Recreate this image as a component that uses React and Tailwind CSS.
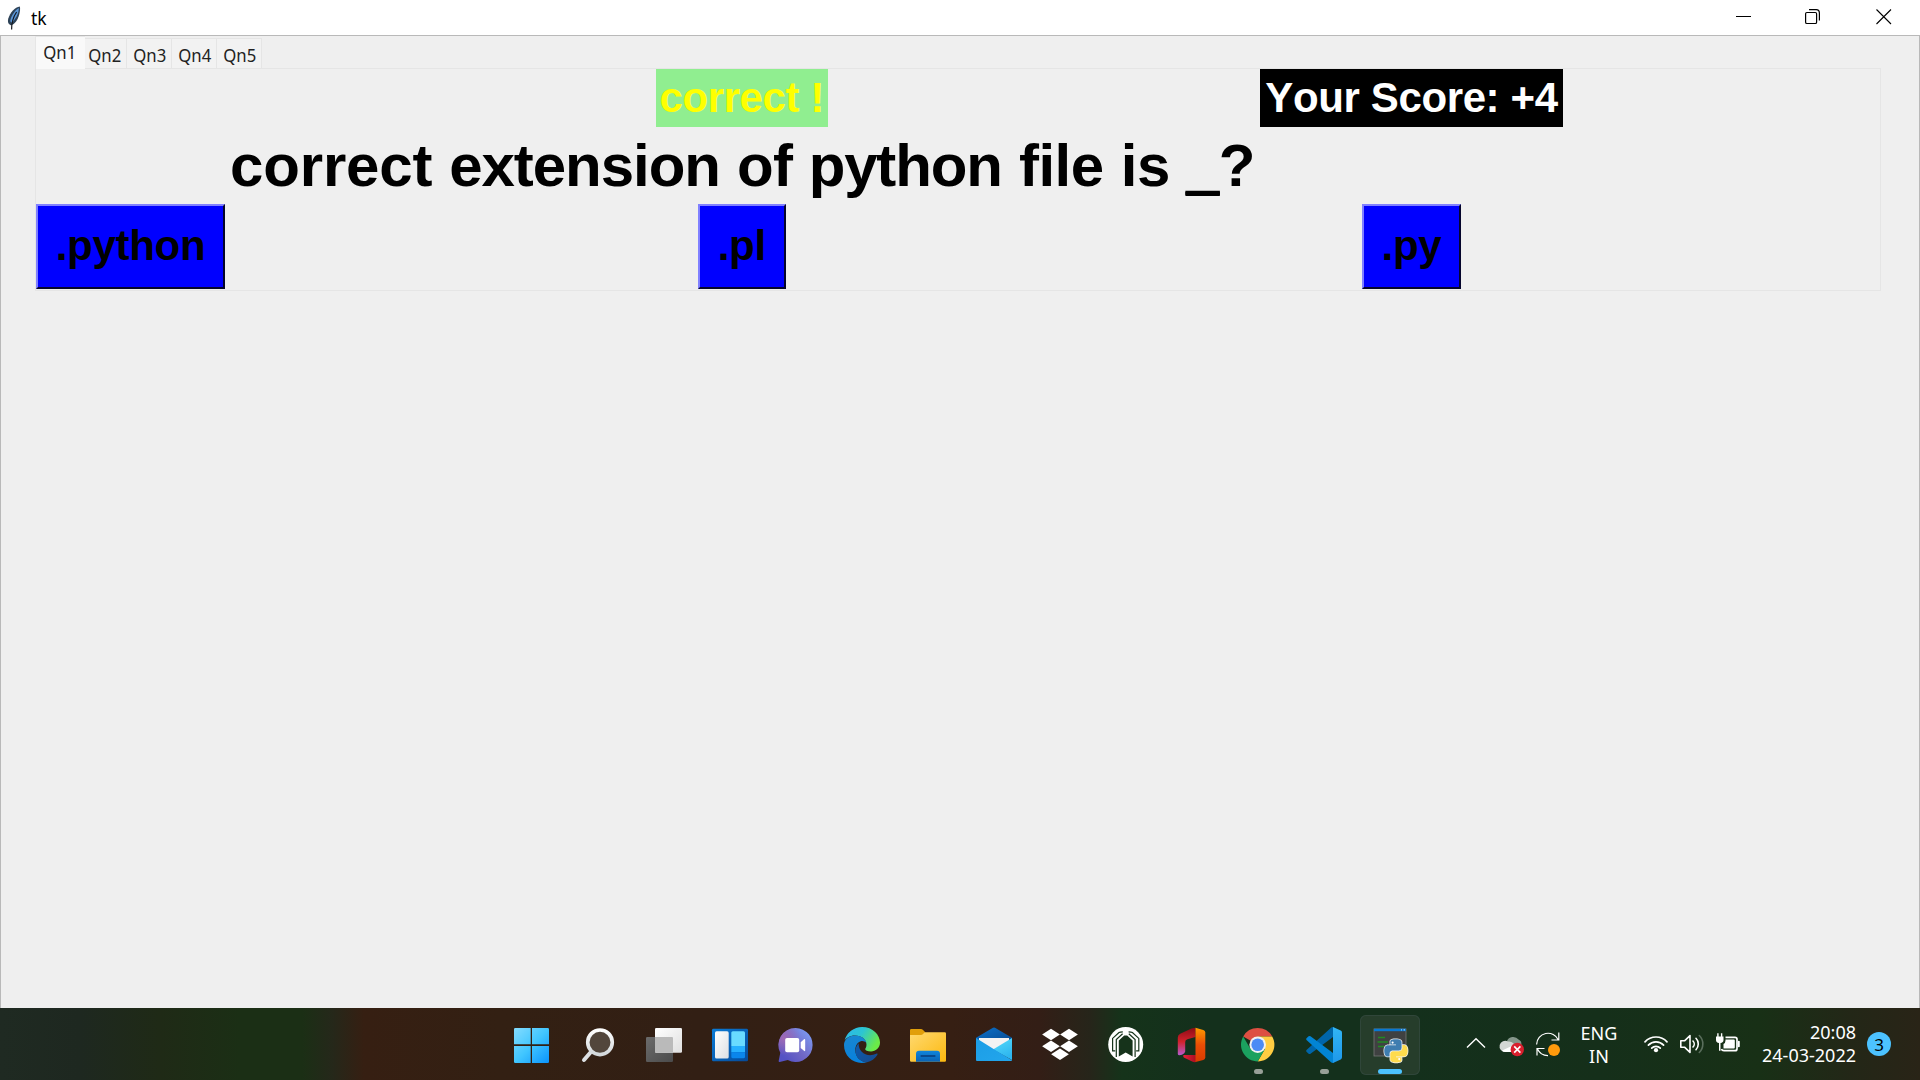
import React from "react";

const tabs = [
  { name: "Qn2", box: "w-[42px] pr-px" },
  { name: "Qn3", box: "w-[45px] pl-0.5" },
  { name: "Qn4", box: "w-[45px] pl-0.5" },
  { name: "Qn5", box: "w-[45px] pl-0.5" },
];
const SNAKE =
  "M14.25.18l.9.2.73.26.59.3.45.32.34.34.25.34.16.33.1.3.04.26.02.2-.01.13V8.5l-.05.63-.13.55-.21.46-.26.38-.3.31-.33.25-.35.19-.35.14-.33.1-.3.07-.26.04-.21.02H8.77l-.69.05-.59.14-.5.22-.41.27-.33.32-.27.35-.2.36-.15.37-.1.35-.07.32-.04.27-.02.21v3.06H3.17l-.21-.03-.28-.07-.32-.12-.35-.18-.36-.26-.36-.36-.35-.46-.32-.59-.28-.73-.21-.88-.14-1.05-.05-1.23.06-1.22.16-1.04.24-.87.32-.71.36-.57.4-.44.42-.33.42-.24.4-.16.36-.1.32-.05.24-.01h.16l.06.01h8.16v-.83H6.18l-.01-2.75-.02-.37.05-.34.11-.31.17-.28.25-.26.31-.23.38-.2.44-.18.51-.15.58-.12.64-.1.71-.06.77-.04.84-.02 1.27.05z";

function Grad({ id, from, to, x2 = 1, y2 = 1, mid }) {
  return (
    <linearGradient id={id} x1="0" y1="0" x2={x2} y2={y2}>
      <stop offset="0" stopColor={from} />
      {mid && <stop offset=".5" stopColor={mid} />}
      <stop offset="1" stopColor={to} />
    </linearGradient>
  );
}

function Icon({ children }) {
  return (
    <svg viewBox="0 0 36 36" className="block h-9 w-9 overflow-visible">
      {children}
    </svg>
  );
}

const Start = () => (
  <Icon>
    <defs>
      <linearGradient id="st" gradientUnits="userSpaceOnUse" x1="0" y1="1" x2="35" y2="36">
        <stop offset="0" stopColor="#84dcff" />
        <stop offset=".5" stopColor="#41c6ff" />
        <stop offset="1" stopColor="#0a93fc" />
      </linearGradient>
    </defs>
    <g fill="url(#st)">
      <path d="M1.2 1H16.7V17.3H0V2.2Q0 1 1.2 1Z" />
      <path d="M18 1H33.8Q35 1 35 2.2V17.3H18Z" />
      <path d="M0 19H16.7V36H1.2Q0 36 0 34.8Z" />
      <path d="M18 19H35V34.8Q35 36 33.8 36H18Z" />
    </g>
  </Icon>
);

const Search = () => (
  <Icon>
    <defs><Grad id="se" from="#ffffff" to="#d3d8db" x2={0} /></defs>
    <path d="M11.3 24.5 4 33" stroke="#dde0e3" strokeWidth="4" strokeLinecap="round" />
    <circle cx="20" cy="15.3" r="12.3" fill="#52463c" stroke="url(#se)" strokeWidth="3.6" />
  </Icon>
);

const TaskView = () => (
  <Icon>
    <defs>
      <Grad id="tv1" from="#ffffff" to="#dfdfdf" />
      <Grad id="tv2" from="#6b6b6b" to="#4b4b4b" />
    </defs>
    <rect x="0" y="10" width="27" height="25" rx="1.3" fill="url(#tv2)" />
    <rect x="9" y="1" width="27" height="24.8" rx="1.3" fill="url(#tv1)" />
    <path d="M9 10H26a1 1 0 0 1 1 1V25.8H10a1 1 0 0 1-1-1Z" fill="#bababa" />
  </Icon>
);

const Widgets = () => (
  <Icon>
    <defs>
      <Grad id="wi1" from="#0a7bd6" to="#064a99" />
      <Grad id="wi2" from="#ffffff" to="#dcdfe3" />
    </defs>
    <rect x="0" y="1.8" width="36" height="32.5" rx="1.4" fill="url(#wi1)" />
    <rect x="3" y="4.3" width="13.7" height="27.2" rx="1.6" fill="url(#wi2)" />
    <path d="M20.8 4.3H31.5Q33 4.3 33 5.8V19H19.3V5.8Q19.3 4.3 20.8 4.3Z" fill="#69dbff" />
    <path d="M19.3 19H33V25.3H19.3Z" fill="#26b0ff" />
    <path d="M19.3 25.3H33V29.8Q33 31.3 31.5 31.3H20.8Q19.3 31.3 19.3 29.8Z" fill="#0a86ec" />
  </Icon>
);

const Chat = () => (
  <Icon>
    <defs>
      <linearGradient id="ch" x1=".1" y1=".8" x2=".9" y2=".1">
        <stop offset="0" stopColor="#5552c4" />
        <stop offset=".45" stopColor="#7168c6" />
        <stop offset="1" stopColor="#7b9af2" />
      </linearGradient>
      <radialGradient id="ch2" cx=".15" cy=".3" r=".5">
        <stop offset="0" stopColor="#a06ab5" />
        <stop offset="1" stopColor="#a06ab5" stopOpacity="0" />
      </radialGradient>
    </defs>
    {["url(#ch)", "url(#ch2)"].map((f) => (
      <path key={f} fill={f} d="M17.4 1a17 17 0 1 1-7.6 32.1L1.7 35Q.4 35.1.7 33.8L2.3 25.8A17 17 0 0 1 17.4 1Z" />
    ))}
    <rect x="7.2" y="11" width="14" height="14.2" rx="1.8" fill="#fff" />
    <path d="M22.7 15.3 26 12.3Q27.2 11.7 27.2 13V23.2Q27.2 24.7 26 23.8L22.7 21Z" fill="#fff" />
  </Icon>
);

const Edge = () => (
  <Icon>
    <defs>
      <Grad id="ed1" from="#2bb7ee" mid="#2cc5d2" to="#6bea48" y2={0.45} />
      <Grad id="ed2" from="#1a86cf" to="#0882dd" x2={0.3} />
      <Grad id="ed3" from="#0b5bb0" to="#174a8c" />
    </defs>
    <path fill="url(#ed1)" d="M.6 13.5A18 18 0 0 1 18 0C29 0 36 8 36 15.5c0 5.5-4.5 9-9 9-3.7 0-5.8-1.3-5.8-2.3 0-.8 1.3-1.5 1.3-4.4C22.5 12.5 17.3 8.6 11 8.6 5.4 8.6 2 11.4.6 13.5Z" />
    <path fill="url(#ed2)" d="M0 18C0 12.7 5 8.6 11 8.6c5.8 0 10.3 3.1 11.3 7.2-1.1-1.3-3-2.1-4.8-1.8-4 .8-6.2 4.8-6.2 9C11.3 30 16.6 35 23 35.2 10.8 38.4 0 30 0 18Z" />
    <path fill="url(#ed3)" d="M14.7 16.3C8.4 22.3 11.6 34.6 23 35.2c4.2-.9 8-3.6 10.3-7.3.6-1-.1-1.6-1-1.1C23.4 30.9 14 25.5 14.7 16.3Z" />
  </Icon>
);

const Explorer = () => (
  <Icon>
    <defs>
      <Grad id="ex1" from="#ffd970" to="#fcb90f" />
      <Grad id="ex2" from="#0f86dc" to="#0a63b4" x2={0} />
    </defs>
    <path d="M1.2 2H11Q12 2 12.8 2.8L15.5 5.4V11H0V3.2Q0 2 1.2 2Z" fill="#e19f0b" />
    <path d="M0 8H11Q12 8 12.8 7.2L14 6Q14.7 5.3 15.7 5.3H34.8Q36 5.3 36 6.5V33.5Q36 34.7 34.8 34.7H1.2Q0 34.7 0 33.5Z" fill="url(#ex1)" />
    <path d="M9 23.7H27Q30 23.7 30 26.7V34.7H6V26.7Q6 23.7 9 23.7Z" fill="url(#ex2)" />
    <path d="M11.3 29H24.7" stroke="#08498c" strokeWidth="1.8" strokeLinecap="round" />
  </Icon>
);

const Mail = () => (
  <Icon>
    <defs>
      <Grad id="ma1" from="#0b70c9" to="#074a91" />
      <Grad id="ma2" from="#1c9de6" to="#22a6ec" />
      <Grad id="ma3" from="#56dcfb" to="#2eb6ef" x2={0.4} />
    </defs>
    <path d="M0 10.8 17 .8Q18 .2 19 .8L36 10.8V16H0Z" fill="url(#ma1)" />
    <path d="M3 11H33V18L18 24 3 18Z" fill="#f3f3f3" />
    <path d="M36 11V33L17 22.6Z" fill="url(#ma3)" />
    <path d="M0 11 18 22.3 36 33.2Q36 34 35 34H1Q0 34 0 33Z" fill="url(#ma2)" />
  </Icon>
);

const Dropbox = () => (
  <Icon>
    <g fill="#fff">
      {[[9, 7.5], [27, 7.5], [9, 19.2], [27, 19.2], [18, 27.2]].map(([x, y]) => (
        <path key={x + "-" + y} d="M0-5.7 8.9 0 0 5.7-8.9 0Z" transform={`translate(${x} ${y})`} />
      ))}
    </g>
  </Icon>
);

const Armoury = () => (
  <Icon>
    <circle cx="17.7" cy="17.5" r="17.5" fill="#fff" />
    <path d="M10.8 29.5V13.6L16.2 8.4H19.2L24.6 13.6V29.5L17.7 25.4Z" fill="#16331b" />
    <g fill="none" stroke="#16331b" strokeWidth="1.2">
      <path d="M8.3 30V12.6L14.6 6.8" />
      <path d="M27.1 30V12.6L20.8 6.8" />
      <path d="M7.3 23.8H4.6V11.4L11 5.6Q12.3 4.8 14.8 4.8" />
      <path d="M28.1 23.8H30.8V11.4L24.4 5.6Q23.1 4.8 20.6 4.8" />
    </g>
  </Icon>
);

const Office = () => (
  <Icon>
    <defs>
      <Grad id="of1" from="#8c0c16" mid="#d2222b" to="#b85bcf" x2={0} />
      <Grad id="of2" from="#ff9a00" mid="#e94d05" to="#d83b01" x2={0} />
      <Grad id="of3" from="#e8203c" to="#a50e20" y2={0} />
    </defs>
    <path d="M21.5.8V10L13.4 12.2Q11.2 13 11.2 15V24.5Q11 26.5 8 27.8 4 29 3.8 27V10.5Q3.8 8 6.2 6.8L17.5 1.4Z" fill="url(#of1)" />
    <path d="M10 28H22V35Q20 35.4 18.2 34.6L9.8 30.6Q8.5 28.3 10 28Z" fill="url(#of3)" />
    <path d="M21.5.8 29.3 3Q31.3 3.7 31.3 5.5V30.3Q31.3 32.3 29.3 33L21.5 35Z" fill="url(#of2)" />
  </Icon>
);

const Chrome = () => (
  <Icon>
    <path d="M17.7 17.7 3.2 9.4A16.7 16.7 0 0 1 32.2 9.4H17.7Z" fill="#dd4f42" />
    <path d="M17.7 9.4H32.2A16.7 16.7 0 0 1 17.7 34.4L24.9 21.9Z" fill="#ffcd42" />
    <path d="M10.5 21.9 3.2 9.4A16.7 16.7 0 0 0 17.7 34.4L24.9 21.9Z" fill="#1ba15f" />
    <circle cx="17.7" cy="17.7" r="8.3" fill="#f1f1f1" />
    <circle cx="17.7" cy="17.7" r="6.3" fill="#4c8bf5" />
  </Icon>
);

const Code = () => (
  <Icon>
    <defs><Grad id="vs" from="#32b5f5" to="#1e98ea" x2={0} /></defs>
    <path d="M27 10 4.5 26.7Q3.6 27.4 2.6 26.7L.5 24.8Q-.3 24 .5 23.1L25.3.6Q26.3-.1 27.5.2Z" fill="#0065a9" />
    <path d="M27 26 4.5 9.3Q3.6 8.6 2.6 9.3L.5 11.2Q-.3 12 .5 12.9L25.3 35.4Q26.3 36.1 27.5 35.8Z" fill="#0284d4" />
    <path d="M27 0 34.7 3.6Q36 4.2 36 5.7V30.3Q36 31.8 34.7 32.4L27 36Z" fill="url(#vs)" />
  </Icon>
);

const PythonApp = () => (
  <Icon>
    <rect x="2" y="2" width="32" height="27" fill="#3f4141" stroke="#777" strokeWidth=".8" />
    <path d="M2 1.7H34V4.2H2Z" fill="#0878d3" />
    <path d="M29 2.9H30M31.6 2.9H33" stroke="#d8ecfa" strokeWidth=".9" />
    <path d="M6 10.5H13M5.5 15H16M6 19.5H12" stroke="#228b22" strokeWidth="1.3" />
    <g transform="translate(12.3 12.2) scale(.97)">
      <g stroke="#f4f4f4" strokeWidth="1.5" strokeLinejoin="round">
        <path d={SNAKE} />
        <path d={SNAKE} transform="rotate(180 12 12)" />
      </g>
      <path d={SNAKE} fill="#3f7db0" />
      <path d={SNAKE} fill="#fedb4d" transform="rotate(180 12 12)" />
      <circle cx="8.6" cy="3.5" r="1.1" fill="#fff" />
      <circle cx="15.4" cy="20.5" r="1.1" fill="#fff" />
    </g>
  </Icon>
);

const apps = [
  { name: "Start", C: Start },
  { name: "Search", C: Search },
  { name: "Task View", C: TaskView },
  { name: "Widgets", C: Widgets },
  { name: "Chat", C: Chat },
  { name: "Edge", C: Edge },
  { name: "File Explorer", C: Explorer },
  { name: "Mail", C: Mail },
  { name: "Dropbox", C: Dropbox },
  { name: "Armoury", C: Armoury },
  { name: "Office", C: Office },
  { name: "Chrome", C: Chrome, open: true },
  { name: "Code", C: Code, open: true },
  { name: "Python", C: PythonApp, active: true },
];

function TrayIcon({ className, children }) {
  return (
    <svg viewBox="0 0 24 24" fill="none" stroke="#fff" strokeWidth="1.4" className={`block h-6 w-6 shrink-0 overflow-visible ${className || ""}`}>
      {children}
    </svg>
  );
}

function Option({ label, className }) {
  return (
    <button
      className={`h-[85px] shrink-0 border-2 border-t-[#8080ff] border-l-[#8080ff] border-r-[#05052c] border-b-[#05052c] bg-[#0000ff] pb-0.5 text-center text-[42px] leading-none font-bold tracking-[-0.3px] whitespace-nowrap text-black ${className}`}
    >
      {label}
    </button>
  );
}

export default function App() {
  return (
    <div className="flex h-[1080px] w-[1920px] flex-col overflow-hidden bg-[#efefef] font-['Noto_Sans',sans-serif] text-black">
      <header className="flex h-[35px] shrink-0 items-center bg-white">
        <svg viewBox="0 0 14 24" className="ml-[7px] h-6 w-3.5">
          <path d="M12.8.4C8 1 3 6.5 1.3 12.5.6 15 .8 17.5 2.6 18.6L3.8 19.2C8 18.2 10.8 13.8 12.3 8.2 13 5.3 13.4 2.3 12.8.4Z" fill="#2d4257" />
          <path d="M11.8 2C8.3 4 4 9.5 3.2 15.2L4.8 16.8C8.4 13.5 12 7.5 11.8 2Z" fill="#5b96d8" />
          <path d="M9.6 6C6.5 10.5 4.6 15 4.6 23.4" fill="none" stroke="#14181e" strokeWidth="1.2" />
        </svg>
        <span className="mt-0.5 ml-2.5 text-[17.5px] leading-none">tk</span>
        <div className="mr-[28px] mb-[2px] ml-auto flex items-center gap-[53px] text-black">
          <svg viewBox="0 0 16 16" className="h-4 w-4"><path d="M0 7.5H15" stroke="#000" /></svg>
          <svg viewBox="0 0 16 16" className="h-4 w-4" fill="none" stroke="#000" strokeWidth="1.2">
            <rect x=".6" y="3.5" width="11" height="11" rx="1.3" />
            <path d="M4 .7H11.2Q14.4 .7 14.4 4.3V11.5" />
          </svg>
          <svg viewBox="0 0 16 16" className="ml-0.5 h-4 w-4"><path d="M.5.5 15 15M15 .5 .5 15" stroke="#000" strokeWidth="1.1" /></svg>
        </div>
      </header>

      <main className="flex-1 border-x border-t border-[#b9b9b9] pl-[34px]">
        <nav className="flex h-8 items-end text-[18px] leading-none text-[#222]">
          <div className="relative z-10 -mb-px flex h-[33px] w-[50px] justify-center border-t border-l border-[#e6e6e6] bg-[#f9f9f9] pt-1.5 pr-0.5">
            <span className="origin-center scale-x-[0.93]">Qn1</span>
          </div>
          {tabs.map((t) => (
            <div key={t.name} className={`flex h-[30px] justify-center border-t border-r border-[#e5e5e5] bg-[#f2f2f2] pt-[7px] ${t.box}`}>
              <span className="origin-center scale-x-[0.93]">{t.name}</span>
            </div>
          ))}
        </nav>
        <section className="h-[223px] w-[1846px] border border-[#e5e5e5] font-['Liberation_Sans',Arial,sans-serif] font-bold [font-kerning:none]">
          <div className="flex h-[58px] text-[42px] leading-[58px] whitespace-nowrap">
            <div className="ml-[619.5px] w-[172.5px] bg-[#90ee90] text-center text-[#ffff00]">
              <span className="tracking-[-0.4px]">correct !</span>
            </div>
            <div className="ml-[432px] w-[303px] bg-black text-center tracking-[-0.38px] text-white">Your Score: +4</div>
          </div>
          <h1 className="h-[77px] pl-[194px] text-[60px] leading-[77px] tracking-[-0.55px] whitespace-nowrap">
            <span className="tracking-[-0.15px]">correct</span>
            <span className="tracking-[-1.05px]">{" "}</span>
            <span className="ml-[1.2px] tracking-[-1.05px]">extension</span>{" "}
            <span className="ml-px">of</span>{" "}
            <span className="tracking-[-1.15px]">python</span>{" "}
            <span className="ml-[1.2px]">file</span>{" "}
            <span className="ml-[1.2px]">is</span>{" "}
            <span className="[text-shadow:0_1px_0_#000,0_2px_0_#000,0_3px_0_#000]">_</span>?
          </h1>
          <div className="flex h-[85px]">
            <Option label=".python" className="w-[189px]" />
            <Option label=".pl" className="ml-[472.5px] w-[88.5px]" />
            <Option label=".py" className="ml-[576px] w-[99px]" />
          </div>
        </section>
      </main>

      <footer className="flex h-[72px] shrink-0 bg-[linear-gradient(90deg,#1f2a22_0px,#1e2820_80px,#1f2a16_160px,#1b2f15_240px,#1b2f15_302px,#25281a_332px,#361f12_364px,#332013_500px,#321f14_700px,#361f13_950px,#331e16_1040px,#26251a_1090px,#15331a_1122px,#14301c_1200px,#14301c_1400px,#152f1a_1600px,#183016_1760px,#232717_1850px,#292417_1920px)] text-white">
        <div className="ml-[502px] flex items-center gap-1.5">
          {apps.map(({ name, C, open, active }) => (
            <div
              key={name}
              title={name}
              className={
                active
                  ? "relative mt-0.5 flex h-[60px] w-[60px] items-center justify-center rounded-md bg-[#263d2b] ring-1 ring-[#30463a] ring-inset"
                  : "relative mt-0.5 flex h-[60px] w-[60px] items-center justify-center"
              }
            >
              <C />
              {open && <i className="absolute bottom-px left-[26px] h-[5px] w-[9px] rounded-full bg-[#98a098]" />}
              {active && <i className="absolute bottom-px left-[18px] h-[5px] w-6 rounded-full bg-[#4cc2ff]" />}
            </div>
          ))}
        </div>
        <div className="ml-auto flex items-center pr-[29px]">
          <TrayIcon>
            <path d="M3 15.5 12 6.8 21 15.5" />
          </TrayIcon>
          <TrayIcon className="ml-3">
            <g stroke="none">
              <path d="M7 9A6.5 6 0 0 1 18.5 7.5 5 5 0 0 1 17 17L8 13Z" fill="#84968a" />
              <path d="M5.5 20A5.6 5.6 0 1 1 8 9.6Q12 9 14 12L17 16 12 20Z" fill="#d3d7d4" />
              <path d="M2 18.5 13 13.5 15 20H5.5Q3 20 2 18.5Z" fill="#fff" />
              <circle cx="17.3" cy="17.5" r="6.7" fill="#d91f2d" />
            </g>
            <path d="M14.2 14.4 20.4 20.6M20.4 14.4 14.2 20.6" strokeWidth="1.6" />
          </TrayIcon>
          <TrayIcon className="ml-3">
            <g strokeWidth="1.2">
              <path d="M.6 12.5A11.4 11.4 0 0 1 22.4 8M22.8.5V8H15.5M1 23.5V16.5H8.5M1.5 17A11.4 11.4 0 0 0 12 23.6" />
            </g>
            <circle cx="18" cy="18" r="6" fill="#ff9a0c" stroke="none" />
          </TrayIcon>
          <div className="mt-px w-[78px] text-center text-[18px] leading-[23px]">
            <div>ENG</div>
            <div>IN</div>
          </div>
          <TrayIcon className="ml-1.5">
            <g strokeWidth="1.7" strokeLinecap="round">
              <path d="M1 9.8A15 15 0 0 1 23 9.8" />
              <path d="M4.4 13.1A10.5 10.5 0 0 1 19.6 13.1" />
              <path d="M7.7 16.1A6 6 0 0 1 16.3 16.1" />
            </g>
            <circle cx="12" cy="18.2" r="2.1" fill="#fff" stroke="none" />
          </TrayIcon>
          <TrayIcon className="ml-3">
            <g strokeLinejoin="round" strokeLinecap="round" strokeWidth="1.6">
              <path d="M.8 8.8H4.5L10 3.6V20.4L4.5 15.2H.8Z" />
              <path d="M13 9A4.3 4.3 0 0 1 13 15M16 6.3A8.3 8.3 0 0 1 16 17.7" />
              <path d="M19.3 3.5A12 12 0 0 1 19.3 20.5" stroke="#5a6e5c" />
            </g>
          </TrayIcon>
          <TrayIcon className="ml-3">
            <path d="M9.5 5.3H19Q21 5.3 21 7.3V16.7Q21 18.7 19 18.7H8Q6 18.7 5.5 17" strokeWidth="1.7" />
            <path d="M9.5 7.5H17.8Q18.8 7.5 18.8 8.5V15.5Q18.8 16.5 17.8 16.5H7.5V12Q9.5 11 9.5 8.5Z" fill="#fff" stroke="none" />
            <path d="M22.8 9.8V14.2" strokeWidth="2" strokeLinecap="round" />
            <path d="M0 4.5H7.5V8Q7.5 10.7 4.5 11V18.7H3V11Q0 10.7 0 8ZM1.2 1.3H2.6V5H1.2ZM4.9 1.3H6.3V5H4.9Z" fill="#fff" stroke="none" />
          </TrayIcon>
          <div className="mb-px ml-[21px] w-[95px] text-right text-[18px] leading-[23px] whitespace-nowrap">
            <div>20:08</div>
            <div>24-03-2022</div>
          </div>
          <div className="ml-[11px] flex h-6 w-6 items-center justify-center rounded-full bg-[#4cc2ff] text-[17px] leading-none text-black">3</div>
        </div>
      </footer>
    </div>
  );
}
